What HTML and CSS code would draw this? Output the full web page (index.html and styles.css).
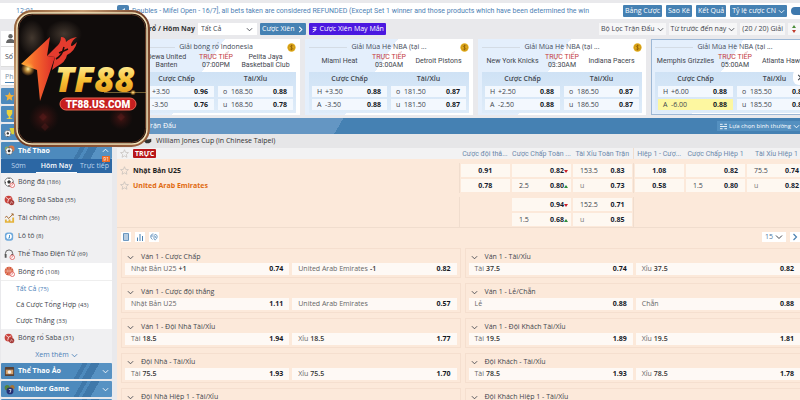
FILE: index.html
```
<!DOCTYPE html>
<html lang="vi">
<head>
<meta charset="utf-8">
<title>Bóng rổ / Hôm Nay</title>
<link rel="stylesheet" href="styles.css">
</head>
<body>
<svg class="defs" aria-hidden="true">
  <symbol id="down" viewBox="0 0 8 8"><path d="M1 2.500 4 5.500 7 2.500" fill="none" stroke="currentColor"/></symbol>
  <symbol id="up" viewBox="0 0 8 8"><path d="M1 5.500 4 2.500 7 5.500" fill="none" stroke="currentColor"/></symbol>
  <symbol id="right" viewBox="0 0 8 8"><path d="M2.500 1 5.500 4 2.500 7" fill="none" stroke="currentColor" stroke-width="1.200"/></symbol>
  <symbol id="star" viewBox="0 0 10 10"><path d="M5 .8 6.200 3.700 9.400 4 7 6.100 7.700 9.200 5 7.600 2.300 9.200 3 6.100 .6 4 3.800 3.700Z" fill="none" stroke="#c4bfbb" stroke-width=".8"/></symbol>
  <symbol id="coin" viewBox="0 0 10 10"><circle cx="5" cy="5" r="4.600" fill="#e3ad1d"/><circle cx="5" cy="5" r="3.300" fill="none" stroke="#b98411" stroke-width=".6"/><path d="M6.500 3.400C5.500 2.600 3.800 2.800 3.800 4S6.400 4.800 6.400 6.100 4.300 7.300 3.500 6.500M5 2v6" fill="none" stroke="#8b5b05" stroke-width=".8"/></symbol>
  <symbol id="soccer" viewBox="0 0 12 12"><circle cx="5.500" cy="5.500" r="4.700" fill="#fff" stroke="#555" stroke-width=".7"/><path d="M5.500 3.300 7.500 4.800 6.700 7H4.300L3.500 4.800ZM3.500 1.300 5.500 2.300 7.500 1.300ZM.9 4.600 2.200 6 1.600 7.900ZM10.100 4.600 8.800 6 9.400 7.900ZM4 10 5.500 8.800 7 10Z" fill="#333"/></symbol>
  <symbol id="live" viewBox="0 0 12 12"><circle cx="9" cy="9" r="2.500" fill="#fff" stroke="#dc4a47" stroke-width=".8"/><path d="M9 7.500V9l-1 .7" fill="none" stroke="#dc4a47" stroke-width=".7"/></symbol>
  <symbol id="basket" viewBox="0 0 12 12"><circle cx="5.500" cy="5.500" r="4.800" fill="#d65a3c"/><path d="M.7 5.500h9.600M5.500.7v9.600M2.200 2c2 2 2 5 0 7M8.800 2c-2 2-2 5 0 7" fill="none" stroke="#f5d0c0" stroke-width=".6"/></symbol>
  <symbol id="saba" viewBox="0 0 12 12"><circle cx="5" cy="5" r="4.300" fill="#c9433d"/><path d="M2 2.500 5 4.500 4 8M5 4.500 8 3" fill="none" stroke="#fff" stroke-width=".8"/><circle cx="8.300" cy="8.300" r="2.900" fill="#a43a38"/><path d="M7 9.700 8 7l1.800 2.300" fill="none" stroke="#f0c9c4" stroke-width=".7"/></symbol>
</svg>

<header class="topbar">
  <div class="news">
    <span class="clock">12:01</span>
    <svg class="bell" viewBox="0 0 12 12"><rect width="12" height="12" rx="2" fill="#4b82b2"/><path d="M3 5v2h2l3 2V3L5 5Z" fill="#dceaf5"/></svg>
    <span class="marquee">Doubles - Mifel Open - 16/7], all bets taken are considered REFUNDED (Except Set 1 winner and those products which have been determined the win</span>
  </div>
  <nav class="actions">
    <button class="btn">Bảng Cược</button>
    <button class="btn">Sao Kê</button>
    <button class="btn">Kết Quả</button>
    <button class="btn odds-type">Tỷ lệ cược CN <svg class="chev"><use href="#down"/></svg></button>
    <button class="toggle" aria-label="Giao diện"></button>
  </nav>
</header>

<div class="layout">
  <aside class="sidebar">
    <div class="user"><svg class="icon" viewBox="0 0 10 10"><circle cx="5" cy="3" r="2" fill="#666"/><path d="M1 9q0-3.500 4-3.500T9 9Z" fill="#666"/></svg></div>
    <div class="balance">Số</div>
    <div class="bettype"><span>Ph</span></div>
    <button class="bar tile" aria-label="Yêu thích"><svg class="icon" viewBox="0 0 12 12"><path d="m6 1 1.500 3.300 3.500.4L8.400 7 9.100 10.600 6 8.800 2.900 10.600 3.600 7 1 4.700l3.500-.4Z" fill="#f3b23b"/></svg></button>
    <button class="bar tile" aria-label="Giải đấu"><svg class="icon" viewBox="0 0 12 12"><path d="M3 1h6v4q-1 3-3 3T3 5ZM5 8h2v2h2v1H3v-1h2Z" fill="#ecd33d"/></svg></button>
    <button class="bar tile" aria-label="Bóng đá"><svg class="icon" viewBox="0 0 12 12"><path d="M6 1h5v7H8Z" fill="#d9d23d"/><use href="#soccer" x="0" y="3" width="9" height="9"/></svg></button>
    <section class="sports">
      <button class="bar open"><svg class="icon" viewBox="0 0 12 12"><circle cx="8" cy="4" r="3.500" fill="#d9784a"/><circle cx="3.500" cy="4" r="2.500" fill="#92b65b"/><use href="#soccer" x="1" y="2" width="10" height="10"/></svg><b>Thể Thao</b><svg class="chev"><use href="#up"/></svg></button>
      <div class="tabs"><button>Sớm</button><button class="on">Hôm Nay</button><button>Trực tiếp<i class="badge">91</i></button></div>
      <ul class="list">
        <li><svg class="icon" viewBox="0 0 12 12"><use href="#soccer"/><use href="#live"/></svg><a href="#">Bóng đá <small>(186)</small></a></li>
        <li><svg class="icon"><use href="#saba"/></svg><a href="#">Bóng Đá Saba <small>(55)</small></a></li>
        <li><svg class="icon" viewBox="0 0 12 12"><path d="M1 10.500V7h2v2h2V7h2v2h2V5h2v5.500Z" fill="#e4b23b"/><path d="m1 5 2-1.500L5 6l5-5M8 1h2v2" fill="none" stroke="#a26428"/></svg><a href="#">Tài chính <small>(36)</small></a></li>
        <li><svg class="icon" viewBox="0 0 12 12"><rect x="1" y="1.500" width="9" height="9" rx="3" fill="#6fa9dc"/><circle cx="5.500" cy="6" r="3" fill="#fff"/><path d="M6 4.300v3.400H4.500" fill="none" stroke="#3f91d0"/></svg><a href="#">Lô tô <small>(8)</small></a></li>
        <li><svg class="icon" viewBox="0 0 12 12"><path d="M1.500 7V5a4 4 0 0 1 8 0v2" fill="none" stroke="#555"/><path d="M.8 5.500h2v4h-2ZM8 5.500h2V8H8Z" fill="#555"/><use href="#live"/></svg><a href="#">Thể Thao Điện Tử <small>(69)</small></a></li>
        <li class="white line"><svg class="icon" viewBox="0 0 12 12"><use href="#basket"/><use href="#live"/></svg><a href="#">Bóng rổ <small>(108)</small></a></li>
        <li class="white sub"><a class="cur" href="#">Tất Cả <small>(75)</small></a></li>
        <li class="white sub"><a href="#">Cá Cược Tổng Hợp <small>(43)</small></a></li>
        <li class="white sub"><a href="#">Cược Thắng <small>(33)</small></a></li>
        <li><svg class="icon"><use href="#saba"/></svg><a href="#">Bóng rổ Saba <small>(31)</small></a></li>
      </ul>
      <button class="more">Xem thêm <svg class="chev"><use href="#down"/></svg></button>
    </section>
    <button class="bar"><svg class="icon" viewBox="0 0 12 12"><rect x="1" y="1" width="10" height="10" rx="1" fill="#594236"/><path d="M2 4h8v5H2Z" fill="#d6a36e"/><circle cx="6" cy="6.500" r="2" fill="#eee"/></svg><b>Thể Thao Ảo</b><svg class="chev"><use href="#down"/></svg></button>
    <button class="bar"><svg class="icon" viewBox="0 0 12 12"><circle cx="3.500" cy="4" r="2.800" fill="#55833d"/><circle cx="9" cy="3.500" r="2.500" fill="#a67436"/><circle cx="6.500" cy="7.500" r="3.800" fill="#252f73"/><path d="M5.300 6h2.400L6.500 9.500" fill="none" stroke="#fff" stroke-width=".8"/></svg><b>Number Game</b><svg class="chev"><use href="#down"/></svg></button>
    <button class="bar" aria-label="Casino"></button>
  </aside>

  <main class="main">
    <div class="toolbar">
      <h1>Bóng rổ / Hôm Nay</h1>
      <span class="select"><select aria-label="Loại"><option>Tất Cả</option></select><svg class="chev"><use href="#down"/></svg></span>
      <button class="btn">Cược Xiên <svg class="chev"><use href="#right"/></svg></button>
      <button class="btn lucky"><svg class="chev" viewBox="0 0 8 8"><path d="M2 1.500h4L3.500 4H6L2 7M2 4h2" fill="none" stroke="#fff"/></svg>Cược Xiên May Mắn</button>
      <span class="spacer"></span>
      <button class="filter">Bộ Lọc Trận Đấu <svg class="chev"><use href="#down"/></svg></button>
      <button class="filter">Từ trước đến nay <svg class="chev"><use href="#down"/></svg></button>
      <button class="filter">(20 / 20) Giải</button>
      <button class="filter sort" aria-label="Sắp xếp"><svg viewBox="0 0 6 10"><path d="M1 4 3 1l2 3Z" fill="#4b8d3a"/><path d="m1 6 2 3 2-3Z" fill="#c0392b"/></svg></button>
    </div>

    <div class="cards">
      <article class="card">
        <h2><span>Giải bóng rổ Indonesia</span><svg class="coin"><use href="#coin"/></svg></h2>
        <div class="teams"><span>Dewa United<br>Banten</span><span class="when"><em>TRỰC TIẾP</em>07:00PM</span><span>Pelita Jaya<br>Basketball Club</span></div>
        <div class="odds"><b>Cược Chấp</b><b>Tài/Xỉu</b>
          <button><i>H</i>+3.50<b>0.96</b></button><button><i>o</i>168.50<b>0.88</b></button>
          <button><i>A</i>-3.50<b>0.76</b></button><button><i>u</i>168.50<b>0.78</b></button></div>
      </article>
      <article class="card">
        <h2><span>Giải Mùa Hè NBA (tại ...</span><svg class="coin"><use href="#coin"/></svg></h2>
        <div class="teams"><span>Miami Heat</span><span class="when"><em>TRỰC TIẾP</em>03:00AM</span><span>Detroit Pistons</span></div>
        <div class="odds"><b>Cược Chấp</b><b>Tài/Xỉu</b>
          <button><i>H</i>+3.50<b>0.88</b></button><button><i>o</i>181.50<b>0.87</b></button>
          <button><i>A</i>-3.50<b>0.88</b></button><button><i>u</i>181.50<b>0.87</b></button></div>
      </article>
      <article class="card">
        <h2><span>Giải Mùa Hè NBA (tại ...</span><svg class="coin"><use href="#coin"/></svg></h2>
        <div class="teams"><span>New York Knicks</span><span class="when"><em>TRỰC TIẾP</em>03:30AM</span><span>Indiana Pacers</span></div>
        <div class="odds"><b>Cược Chấp</b><b>Tài/Xỉu</b>
          <button><i>H</i>+2.50<b>0.88</b></button><button><i>o</i>186.50<b>0.87</b></button>
          <button><i>A</i>-2.50<b>0.88</b></button><button><i>u</i>186.50<b>0.87</b></button></div>
      </article>
      <article class="card picked">
        <h2><span>Giải Mùa Hè NBA (tại ...</span><svg class="coin"><use href="#coin"/></svg></h2>
        <div class="teams"><span>Memphis Grizzlies</span><span class="when"><em>TRỰC TIẾP</em>05:00AM</span><span>Atlanta Hawks</span></div>
        <div class="odds"><b>Cược Chấp</b><b>Tài/Xỉu</b>
          <button><i>H</i>+6.00<b>0.88</b></button><button><i>o</i>185.50<b>0.87</b></button>
          <button class="hot"><i>A</i>-6.00<b>0.88</b></button><button><i>u</i>185.50<b>0.87</b></button></div>
      </article>
      <button class="next" aria-label="Tiếp"><svg class="chev"><use href="#right"/></svg></button>
    </div>

    <div class="panel-head"><span>Tất Cả Trận Đấu</span><button><svg class="chev" viewBox="0 0 8 8"><path d="M0 1.500h3M5 1.500h3M0 4h8M0 6.500h3M5 6.500h3" stroke="#fff"/></svg>Lựa chọn bình thường <svg class="chev"><use href="#down"/></svg></button></div>

    <section class="panel">
      <div class="league"><svg class="cap" viewBox="0 0 12 8"><path d="M1 1q4 2 10 0v4L8 7H4L1 4Z" fill="#333"/></svg>William Jones Cup (in Chinese Taipei)</div>
      <div class="wide">
        <table class="match">
          <colgroup><col><col class="c1"><col class="c2"><col class="c2"><col class="c1"><col class="c2"><col class="c2"></colgroup>
          <thead><tr>
            <th class="event"><svg class="star"><use href="#star"/></svg><mark>TRỰC</mark></th>
            <th>Cược đội thắ...</th><th>Cược Chấp Toàn ...</th><th>Tài Xỉu Toàn Trận</th><th class="edge">Hiệp 1 - Cượ...</th><th>Cược Chấp Hiệp 1</th><th>Tài Xỉu Hiệp 1</th>
          </tr></thead>
          <tbody>
            <tr><td class="event"><svg class="star"><use href="#star"/></svg><b>Nhật Bản U25</b></td>
              <td class="edge"><button class="mid"><b>0.91</b></button></td><td><button><b class="dn">0.82</b></button></td><td><button>153.5<b>0.83</b></button></td>
              <td class="edge"><button class="mid"><b>1.08</b></button></td><td><button><b>0.82</b></button></td><td><button>75.5<b>0.74</b></button></td></tr>
            <tr><td class="event away"><svg class="star"><use href="#star"/></svg><b>United Arab Emirates</b></td>
              <td class="edge"><button class="mid"><b>0.78</b></button></td><td><button>2.5<b class="upw">0.80</b></button></td><td><button><i>u</i><b>0.73</b></button></td>
              <td class="edge"><button class="mid"><b>0.58</b></button></td><td><button>1.5<b>0.80</b></button></td><td><button><i>u</i><b>0.82</b></button></td></tr>
          </tbody>
          <tbody>
            <tr><td></td><td class="edge"></td><td><button><b class="dn">0.94</b></button></td><td><button>152.5<b>0.71</b></button></td><td class="edge"></td><td></td><td></td></tr>
            <tr><td></td><td class="edge"></td><td><button>1.5<b class="upw">0.68</b></button></td><td><button><i>u</i><b>0.85</b></button></td><td class="edge"></td><td></td><td></td></tr>
          </tbody>
        </table>
      </div>
      <div class="tools">
        <button aria-label="Thống kê"><svg viewBox="0 0 8 8"><path d="M1.500.5h5v7h-5ZM1 2h6M1 4h6M1 6h6" fill="none" stroke="#4b82b2" stroke-width=".8"/></svg></button>
        <button aria-label="Biểu đồ"><svg viewBox="0 0 8 8"><path d="M1.500 4.500V8M4 1v7M6.500 3v5" stroke="#4b82b2"/></svg></button>
        <button aria-label="Trực tiếp"><svg viewBox="0 0 8 8"><path d="M3.500 1C0 1 0 5 2.500 6.500M4 3.500c0-3.500 4-2 3 1S3.500 8 4 3.500M1 3h2M5 3l1 2" fill="none" stroke="#4b82b2" stroke-width=".8"/></svg></button>
        <span class="spacer"></span>
        <span class="select page"><select aria-label="Số trang"><option>15</option></select><svg class="chev"><use href="#down"/></svg></span>
        <button aria-label="Trang sau"><svg class="chev"><use href="#right"/></svg></button>
      </div>
      <div class="markets">
        <section><h3><svg class="chev"><use href="#down"/></svg>Ván 1 - Cược Chấp</h3><div><button>Nhật Bản U25 <b>+1</b><strong>0.74</strong></button><button>United Arab Emirates <b>-1</b><strong>0.82</strong></button></div></section>
        <section><h3><svg class="chev"><use href="#down"/></svg>Ván 1 - Tài/Xỉu</h3><div><button>Tài <b>37.5</b><strong>0.74</strong></button><button>Xỉu <b>37.5</b><strong>0.82</strong></button></div></section>
        <section><h3><svg class="chev"><use href="#down"/></svg>Ván 1 - Cược đội thắng</h3><div><button>Nhật Bản U25<strong>1.11</strong></button><button>United Arab Emirates<strong>0.57</strong></button></div></section>
        <section><h3><svg class="chev"><use href="#down"/></svg>Ván 1 - Lẻ/Chẵn</h3><div><button>Lẻ<strong>0.88</strong></button><button>Chẵn<strong>0.88</strong></button></div></section>
        <section><h3><svg class="chev"><use href="#down"/></svg>Ván 1 - Đội Nhà Tài/Xỉu</h3><div><button>Tài <b>18.5</b><strong>1.94</strong></button><button>Xỉu <b>18.5</b><strong>1.77</strong></button></div></section>
        <section><h3><svg class="chev"><use href="#down"/></svg>Ván 1 - Đội Khách Tài/Xỉu</h3><div><button>Tài <b>19.5</b><strong>1.89</strong></button><button>Xỉu <b>19.5</b><strong>1.81</strong></button></div></section>
        <section><h3><svg class="chev"><use href="#down"/></svg>Đội Nhà - Tài/Xỉu</h3><div><button>Tài <b>75.5</b><strong>1.93</strong></button><button>Xỉu <b>75.5</b><strong>1.70</strong></button></div></section>
        <section><h3><svg class="chev"><use href="#down"/></svg>Đội Khách - Tài/Xỉu</h3><div><button>Tài <b>78.5</b><strong>1.93</strong></button><button>Xỉu <b>78.5</b><strong>1.78</strong></button></div></section>
        <section><h3><svg class="chev"><use href="#down"/></svg>Đội Nhà Hiệp 1 - Tài/Xỉu</h3></section>
        <section><h3><svg class="chev"><use href="#down"/></svg>Đội Khách Hiệp 1 - Tài/Xỉu</h3></section>
      </div>
    </section>
  </main>
</div>

<svg class="logo" viewBox="0 0 136 137" role="img" aria-label="TF88">
  <defs>
    <linearGradient id="frame" x1="0" y1="0" x2="1" y2="1"><stop offset="0" stop-color="#8d5a35"/><stop offset=".25" stop-color="#c79c72"/><stop offset=".5" stop-color="#6f3d26"/><stop offset="1" stop-color="#9a6240"/></linearGradient>
    <linearGradient id="gold" x1="0" y1="0" x2="0" y2="1"><stop offset="0.200" stop-color="#fff09a"/><stop offset=".55" stop-color="#f7bf32"/><stop offset="0.900" stop-color="#e09018"/></linearGradient>
    <linearGradient id="bolt" x1="0" y1="0" x2="1" y2="0"><stop offset="0" stop-color="#ffac36"/><stop offset=".4" stop-color="#f66a2c"/><stop offset="1" stop-color="#dd2c2a"/></linearGradient>
    <radialGradient id="glow"><stop offset="0" stop-color="#fff5b0"/><stop offset=".4" stop-color="#ffc050" stop-opacity=".7"/><stop offset="1" stop-color="#ff9a30" stop-opacity="0"/></radialGradient>
    <radialGradient id="haze"><stop offset="0" stop-color="#43382f"/><stop offset="1" stop-color="#43382f" stop-opacity="0"/></radialGradient>
    <radialGradient id="ember"><stop offset="0" stop-color="#6b1c1a" stop-opacity=".6"/><stop offset="1" stop-color="#4b1413" stop-opacity="0"/></radialGradient>
  </defs>
  <rect x="1.500" y="1.500" width="133" height="134" rx="17" fill="#100c0b" stroke="url(#frame)" stroke-width="3"/>
  <rect x="3" y="3" width="130" height="131" rx="15" fill="none" stroke="#f4e2b8" stroke-width="1.500"/>
  <rect x="4.500" y="4.500" width="127" height="128" rx="14" fill="none" stroke="#5d3522"/>
  <ellipse cx="50" cy="24" rx="18" ry="14" fill="url(#haze)"/>
  <ellipse cx="18" cy="28" rx="13" ry="18" fill="url(#haze)"/>
  <circle cx="30" cy="108" r="15" fill="url(#ember)"/><circle cx="107" cy="108" r="12" fill="url(#ember)"/>
  <path d="m27 117 4-4 4 4-4 4ZM25 107l4-4 4 4-4 4ZM103 107l4-4 4 4-4 4Z" fill="#691f20" opacity=".35"/>
  <path d="M36 27 7 54 23 60 26 91 41 47 33 46Z" fill="url(#bolt)"/>
  <path d="M33 46 42 37Q47 33 47 27 52 27 52 32 56 28 63 27 58 30 57 35 57 38 63 32 61 41 53 45 52 52 42 57L38 60 41 47Z" fill="#e43b2e"/>
  <path d="M42 49Q48 46 50 37M45 43 54 39" fill="none" stroke="#1b0d0a" stroke-width="1.500"/>
  <circle cx="14" cy="59" r="7" fill="url(#glow)"/>
  <text class="mark" x="41" y="82" fill="url(#gold)">TF88</text>
  <path d="M90 82.500h42" stroke="#f9d674" stroke-width=".6" opacity=".7"/><circle cx="119" cy="82.500" r="3" fill="url(#glow)"/>
  <rect x="46" y="88" width="76" height="12" rx="6" fill="#c71f20" stroke="#ec6550"/>
  <text class="domain" x="84" y="98" text-anchor="middle" fill="#fff">TF88.US.COM</text>
</svg>
</body>
</html>
```
FILE: styles.css
```
* { box-sizing: border-box; }
body { margin: 0; height: 100vh; overflow: hidden; background: #e9e9ec; color: #41454d; font: 7px/10px "Open Sans", "Noto Sans", sans-serif; position: relative; }
button, select { font: inherit; color: inherit; border: 0; padding: 0; margin: 0; background: none; white-space: nowrap; }
a { color: inherit; text-decoration: none; }
i, em { font-style: normal; }
small { font-size: 6px; }
h1, h2, h3, ul { margin: 0; padding: 0; font: inherit; list-style: none; }
.defs { position: absolute; width: 0; height: 0; }
.chev { width: 7px; height: 7px; flex: none; }
.icon { width: 11px; height: 11px; flex: none; }
.spacer { flex: 1; }

.topbar { display: flex; align-items: center; gap: 8px; height: 16px; margin-top: 3px; background: #fff; }
.news { flex: 1; min-width: 0; display: flex; align-items: center; color: #4e7fb4; white-space: nowrap; overflow: hidden; }
.clock { width: 117px; padding-left: 16px; flex: none; }
.bell { width: 12px; height: 12px; flex: none; margin-right: 3px; }
.marquee { font-family: Roboto, sans-serif; }
.actions { display: flex; gap: 4px; flex: none; overflow: hidden; }
.btn { display: flex; align-items: center; gap: 2px; height: 12px; padding: 0 2px; border-radius: 1px; background: #4581b3; color: #fff; }
.toggle { width: 9px; height: 8px; margin-top: 2px; border-radius: 4px 0 0 4px; background: #3d78ad; }

.layout { display: grid; grid-template-columns: 112px minmax(0, 1fr); gap: 2px; }
.sidebar { padding: 12px 0 0 1px; }
.user, .balance, .bettype { display: flex; align-items: center; height: 20px; padding-left: 4px; background: #fff; border-bottom: 1px solid #ddd; }
.user { height: 16px; }
.bettype { height: 16px; margin: 3px 0 2px; color: #7b8da3; }
.bettype span { border-bottom: 1px solid #4b82b2; }
.bar { display: flex; align-items: center; gap: 3px; width: 100%; height: 16px; margin-bottom: 2px; padding: 0 3px; border-radius: 1px; color: #fff; background: linear-gradient(120deg, #4d8abd 0 68%, #3f78aa 68% 72%, #4d8abd 72% 75%, #3f78aa 75% 82%, #5792c3 82%); }
.bar b { flex: 1; text-align: left; }
.open { margin: 0; height: 17px; }
.tabs { display: flex; height: 14px; background: #2c67a4; color: #bcd4ec; }
.tabs button { flex: 1; position: relative; border-bottom: 1px solid transparent; }
.tabs .on { flex: 1 0 6px; color: #fff; border-color: #fff; font-weight: 600; }
.badge { position: absolute; right: 2px; top: -3px; padding: 0 1px; background: #ee6a24; color: #fff; font-size: 5px; line-height: 6px; }
.list li { display: flex; align-items: center; gap: 3px; height: 18px; padding-left: 3px; background: #f0f0f2; }
.list .white { background: #fff; }
.list .line { border-bottom: 1px solid #eee; }
.list .sub { height: 16px; padding-left: 15px; }
.cur { color: #4b80b8; }
.more { display: flex; align-items: center; justify-content: center; gap: 2px; width: 100%; height: 16px; color: #4b80b8; background: #f0f0f2; }

.main { min-width: 0; overflow: hidden; }
.toolbar { display: flex; align-items: center; gap: 3px; height: 20px; padding-left: 17px; }
h1 { font-weight: 700; color: #333; width: 64px; display: flex; justify-content: flex-end; white-space: nowrap; }
.select { position: relative; display: flex; }
.select select { appearance: none; width: 59px; height: 12px; padding-left: 3px; background: #fff; }
.select .chev { position: absolute; right: 4px; top: 3px; pointer-events: none; }
.toolbar .lucky { background: #4b18e0; }
.filter { display: flex; align-items: center; gap: 2px; height: 12px; padding: 0 2px; background: #f6f6f7; }
.sort { width: 12px; padding: 0 3px; }
.sort svg { width: 6px; height: 10px; }

.cards { position: relative; display: flex; gap: 5px; padding-left: 18px; margin-bottom: 3px; }
.card { flex: 0 0 168px; height: 76px; padding: 3px 4px; background: linear-gradient(125deg, #e4effc 42%, #fff 42%); }
.picked { border: 1px solid #9db8d6; padding: 2px 3px; }
.card h2 { display: grid; grid-template-columns: 1fr auto 1fr; align-items: center; gap: 4px; height: 8px; color: #3f4a58; }
.card h2::before { content: ""; height: 1px; background: #d4dce5; }
.coin { width: 9px; height: 9px; justify-self: end; }
.teams { display: grid; grid-template-columns: 61px 38px 61px; justify-content: center; align-items: center; height: 22px; text-align: center; line-height: 8px; font-family: Roboto, sans-serif; white-space: nowrap; }
.when em { display: block; color: #c43c40; }
.odds { display: grid; grid-template-columns: 1fr 1fr; gap: 2px 4px; padding: 2px 3px 3px; background: linear-gradient(#cfe2f5, #dfecf9); }
.odds > b { text-align: center; font-weight: 600; line-height: 10px; }
.odds button { display: flex; align-items: center; height: 11px; padding: 0 6px 0 5px; background: #f3f8fe; }
.odds button i { width: 8px; text-align: left; }
.odds button b { margin-left: auto; color: #14181f; }
.odds .hot { background: #fdf7a0; }
.next { position: absolute; right: -5px; top: 30px; display: grid; place-items: center; width: 12px; height: 16px; border-radius: 6px 0 0 6px; background: #fff; }

.panel-head { display: flex; justify-content: space-between; align-items: center; height: 16px; background: linear-gradient(120deg, #6496c3 33%, #4581b3 33%); color: #fff; padding-left: 10px; }
.panel-head button { display: flex; align-items: center; gap: 2px; height: 10px; padding-left: 3px; background: #5490c0; font-size: 6px; }
.panel { margin-left: 3px; background: #fce9da; }
.league { display: flex; align-items: center; gap: 4px; height: 14px; padding-left: 26px; background: #e6e6e8; color: #333; }
.cap { width: 9px; height: 6px; }
.wide { margin-right: -7px; }
.match { width: 100%; table-layout: fixed; border-collapse: collapse; }
.c1 { width: 52px; }
.c2 { width: 61px; }
.match th { height: 13px; padding: 0; background: #f2f2f3; color: #6d89ab; font-weight: 400; text-align: center; white-space: nowrap; font-family: Roboto, sans-serif; }
.match .event { text-align: left; padding: 0 3px; }
.match td { height: 15px; padding: 1px; }
.match .edge { border-left: 1px solid #f0ddce; }
.match td button { display: flex; align-items: center; width: 100%; height: 13px; padding: 0 7px; background: #fef8f1; }
.match tbody { border-top: 4px solid #fce9da; border-bottom: 1px solid #f0ddce; }
.match td button b { position: relative; margin-left: auto; color: #14202e; }
.match td .mid b { margin: auto; }
.match td i { color: #777; }
.dn::after, .upw::after { content: ""; position: absolute; left: 100%; top: 4px; border: 2px solid transparent; border-top: 3px solid #c8202a; border-bottom: 0; }
.upw::after { border-top: 0; border-bottom: 3px solid #2e8b3d; }
.star { width: 9px; height: 9px; margin-right: 4px; vertical-align: middle; }
.event b { color: #1d1d1d; }
.away b { color: #e06a10; }
mark { padding: 0 2px; border-radius: 1px; background: #b8161b; color: #fff; font: 700 7px/9px "Open Sans", sans-serif; }
.tools { display: flex; align-items: center; gap: 4px; height: 17px; padding-left: 4px; margin-bottom: 3px; }
.tools > button { display: grid; place-items: center; width: 10px; height: 10px; background: #fff; color: #4b82b2; }
.tools svg { width: 8px; height: 8px; }
.page select { width: 24px; height: 10px; color: #56789b; }
.page .chev { right: 3px; top: 1px; }
.markets { display: grid; grid-template-columns: 1fr 1fr; gap: 5px 4px; margin: 0 -4px 0 4px; }
.markets section { height: 30px; padding: 2px 3px; border: 1px solid #f5dfcf; }
.markets h3 { display: flex; align-items: center; gap: 7px; height: 12px; padding-left: 2px; white-space: nowrap; }
.markets section div { display: grid; grid-template-columns: 1fr 1fr; gap: 3px; }
.markets button { display: flex; align-items: center; gap: 2px; height: 12px; padding: 0 6px; background: #fef9f5; color: #666; }
.markets b { color: #333; font-weight: 600; }
.markets strong { margin-left: auto; color: #14181f; }

.logo { position: absolute; left: 14px; top: 10px; width: 136px; height: 137px; }
.mark { font: italic 800 35px "Open Sans", sans-serif; }
.domain { font: 900 10px Roboto, sans-serif; }
```
